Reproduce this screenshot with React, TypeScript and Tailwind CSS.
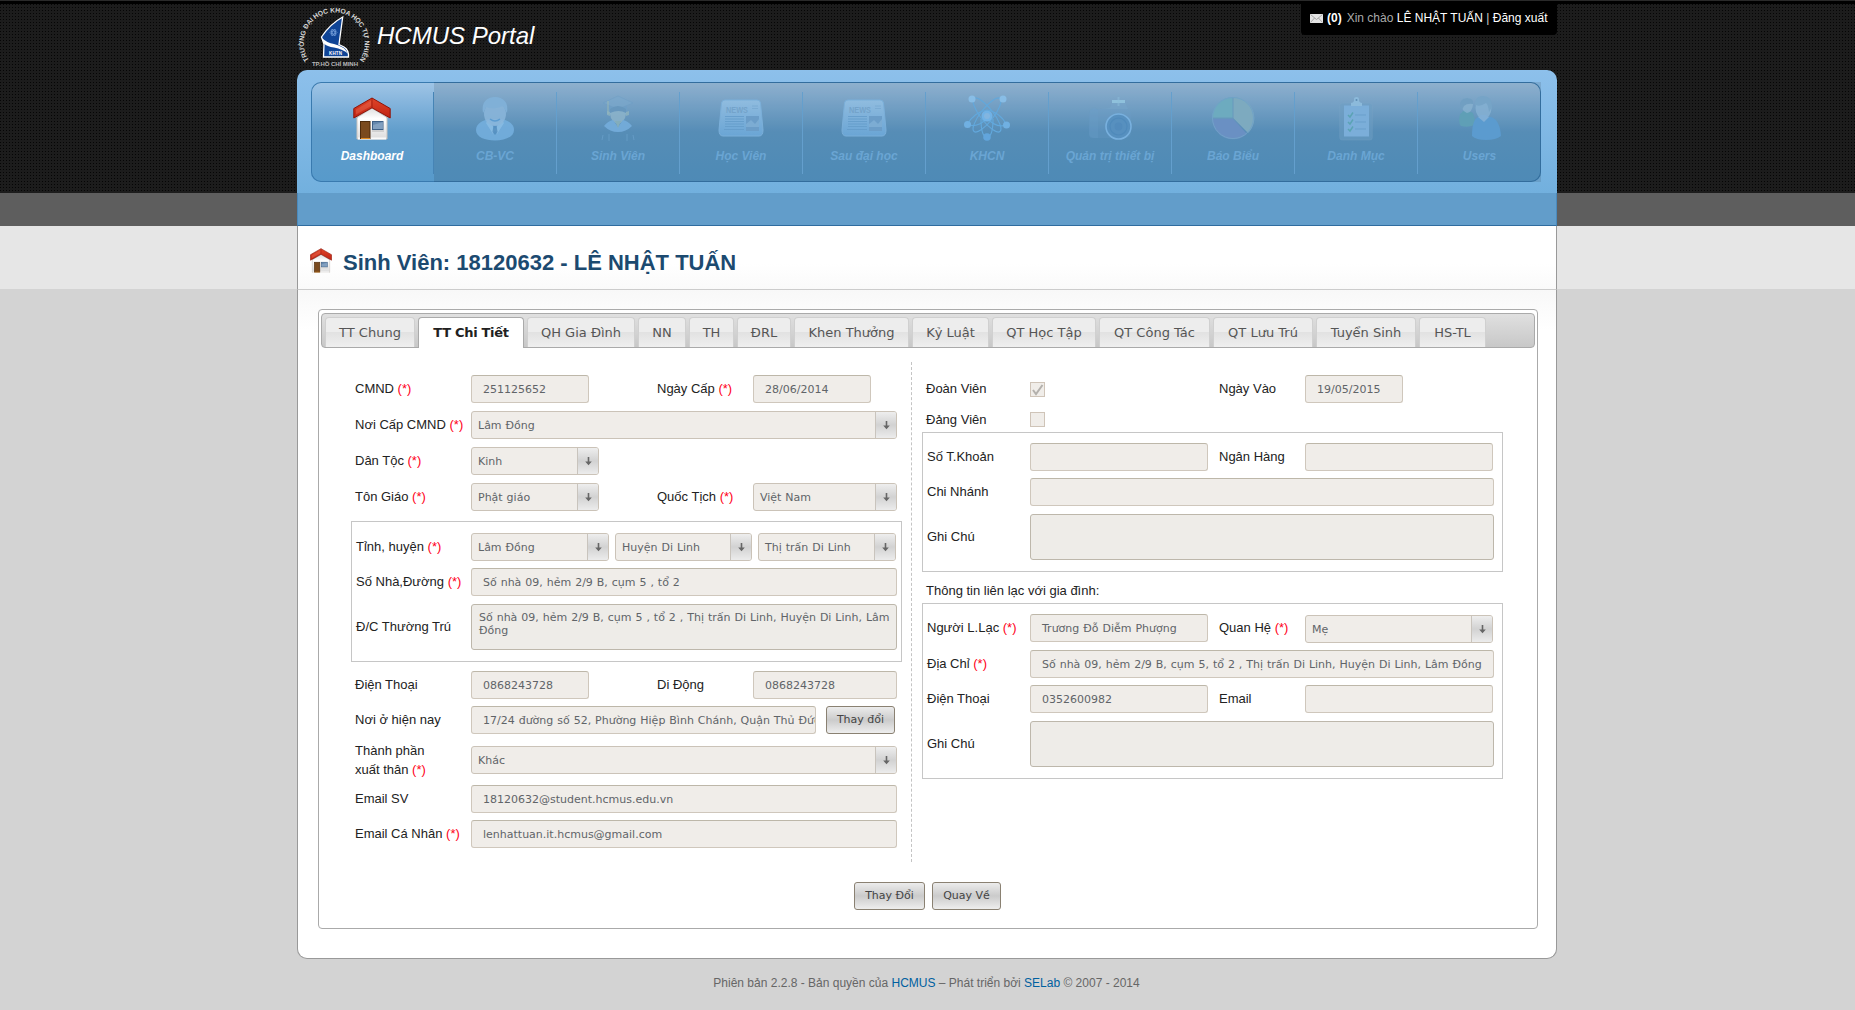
import React from "react";

type Kids = { children?: React.ReactNode };

/* ---------- icons ---------- */

function House({ className }: { className: string }) {
  return (
    <svg className={className} viewBox="0 0 38 43">
      <defs>
        <linearGradient id="wall" x1="0" y1="0" x2="0" y2="1">
          <stop offset="0" stopColor="#d4d4d4" />
          <stop offset=".4" stopColor="#ffffff" />
          <stop offset="1" stopColor="#dcdcdc" />
        </linearGradient>
        <linearGradient id="roof" x1="0" y1="0" x2="0" y2="1">
          <stop offset="0" stopColor="#e04428" />
          <stop offset="1" stopColor="#c02414" />
        </linearGradient>
      </defs>
      <path d="M4 17L19 8L34 17V42H4Z" fill="url(#wall)" stroke="#c9c4be" strokeWidth="1" />
      <path d="M5 40.5H33V42.5H5Z" fill="#fafafa" />
      <path d="M4 21L19 11.5L34 21V18L19 9L4 18Z" fill="#8e8e8e" opacity=".5" />
      <path d="M.8 11.5L19 1L37.2 11.5V21L19 10.8L.8 21Z" fill="url(#roof)" stroke="#8f1409" strokeWidth="1" />
      <path d="M3 12.5L18 3.8V9L3 17.5Z" fill="#f07a60" opacity=".35" />
      <path d="M19 1V10.8" stroke="#8f1409" strokeWidth=".7" />
      <rect x="7.500" y="24.500" width="9.500" height="17" fill="#7a4a1e" stroke="#4d2b0c" />
      <path d="M8 41.500H17" stroke="#e08a20" />
      <rect x="19.500" y="24.500" width="10.500" height="8" fill="#6487ad" stroke="#3d5f86" />
      <path d="M20 28L30 25V32H20Z" fill="#8fabc8" opacity=".7" />
      <path d="M19 34H31" stroke="#b8b8b8" />
    </svg>
  );
}

function Person() {
  return (
    <svg className="h-[45px] w-[40px]" viewBox="0 0 40 45">
      <path d="M1 34C1 27 9 24 14 23H26C32 24 39 27 39 34C39 41 30 44.500 20 44.500S1 41 1 34Z" fill="#76b0df" opacity=".85" />
      <path d="M13 24L20 33L27 24L29 27L22 38L20 34L18 38L11 27Z" fill="#8fc0e6" opacity=".7" />
      <path d="M18.500 29H21.500L22.500 36L20 39L17.500 36Z" fill="#4a86b8" opacity=".7" />
      <ellipse cx="20" cy="18" rx="11" ry="12" fill="#8bb6da" opacity=".85" />
      <path d="M8 17C6 6 12 1 20 1S34 6 32 17C30 14 29 11 27 10C21 14 14 12 11 11C10 14 9 15 8 17Z" fill="#80b0d7" />
      <path d="M15 23Q20 27 25 23" stroke="#5c9cd0" strokeWidth="1.600" fill="none" />
    </svg>
  );
}

function Graduate() {
  return (
    <svg className="h-[46px] w-[34px]" viewBox="0 0 34 46">
      <path d="M17 1L32 8L17 14L2 8Z" fill="#7ba9cd" opacity=".6" stroke="#6d9dc4" strokeWidth=".7" />
      <path d="M8 11V17Q17 10 26 17V11L17 14Z" fill="#6c9ec6" opacity=".7" />
      <path d="M9 15Q17 9 25 15V19Q24 27 17 29Q10 27 9 19Z" fill="#8fb5cb" opacity=".8" />
      <path d="M9 14Q17 8 25 14V18Q18 14 9 18Z" fill="#6797bd" />
      <path d="M7 6V19" stroke="#a0bcb4" strokeWidth="1.200" opacity=".7" />
      <path d="M6 16L9 17V21L6 20ZM28 16L25 17V21L28 20Z" fill="#94b6be" opacity=".7" />
      <path d="M3 31Q7 26 12 25L17 32L22 25Q27 26 31 31Q25 37 17 37T3 31Z" fill="#72aad8" />
      <path d="M14 26L17 33L20 26Z" fill="#83adbb" />
      <path d="M1 45L2 40M8 39V46M26 39V46M33 45L32 40" stroke="#6fa5d0" opacity=".6" />
    </svg>
  );
}

function News() {
  return (
    <svg className="h-[38px] w-[46px]" viewBox="0 0 46 38">
      <defs>
        <linearGradient id="paper" x1="0" y1="0" x2="0" y2="1">
          <stop offset="0" stopColor="#90bcdf" />
          <stop offset="1" stopColor="#6aa5d5" />
        </linearGradient>
      </defs>
      <path d="M7 1H39Q42 1 42.500 4L45 31Q45 37 41 37H5Q1 37 1 31L3.500 4Q4 1 7 1Z" fill="url(#paper)" stroke="#7bafd9" />
      <text x="8" y="13.500" fontSize="9" fontWeight="bold" textLength="22" lengthAdjust="spacingAndGlyphs" fill="#74a3ca" className="font-['Liberation_Sans']">NEWS</text>
      <path d="M34 7H40M34 9.500H40" stroke="#77a8d0" strokeWidth=".8" />
      <path d="M7 17.500H26M7 20H26M7 22.500H26M7 25H26M7 27.500H26M6 30.500H26" stroke="#659dcb" strokeWidth=".9" />
      <rect x="28" y="17" width="13" height="15" fill="#6b9dc8" />
      <path d="M28 25L33 21L37 25L41 20V28H28Z" fill="#7cacd3" />
    </svg>
  );
}

function Atom() {
  return (
    <svg className="h-[46px] w-[48px]" viewBox="0 0 48 46">
      <g fill="none" stroke="#62a8dc" strokeWidth="1.200">
        <ellipse cx="24" cy="20" rx="6.500" ry="21" transform="rotate(-38 24 20)" />
        <ellipse cx="24" cy="20" rx="6.500" ry="21" transform="rotate(38 24 20)" />
        <path d="M18 24C18 35 20 42 24 42S30 35 30 24" />
        <path d="M4.500 29.500C8 22 16 16 24 15C32 16 40 22 43.500 30" />
        <path d="M4.500 29.500C14 33 22 27 24 21C26 27 34 33 43.500 30" />
      </g>
      <circle cx="24" cy="21" r="5.500" fill="#70b2e6" />
      <circle cx="24" cy="21" r="3" fill="#82b5e0" />
      <g fill="#70b0e2">
        <circle cx="9" cy="4" r="3.500" fill="#88bde6" />
        <circle cx="40" cy="4" r="3.500" fill="#88bde6" />
        <circle cx="4.500" cy="29.500" r="3.500" />
        <circle cx="43.500" cy="30" r="3.500" />
        <circle cx="24" cy="42" r="3.800" fill="#62a5dc" />
      </g>
    </svg>
  );
}

function Camera() {
  return (
    <svg className="h-[45px] w-[44px]" viewBox="0 0 44 45">
      <rect x="1" y="13" width="42" height="29" rx="5" fill="#6fa2cc" opacity=".2" />
      <path d="M2 14Q6 9 10 14V42H4Q1 42 1 38Z" fill="#6c9fca" opacity=".25" />
      <path d="M12 13L22 12L25 4H36L40 13" fill="#79a9cd" opacity=".35" />
      <path d="M24 5.500H37" stroke="#8fc1dc" strokeWidth="3" />
      <path d="M30.500 1V10" stroke="#8dbedb" strokeWidth="2" opacity=".5" />
      <circle cx="30.500" cy="30.500" r="12.500" fill="#5790bf" stroke="#78b0de" strokeWidth="1.600" />
      <circle cx="30.500" cy="30.500" r="8.500" fill="none" stroke="#4f8abb" strokeWidth="1.200" />
      <circle cx="30.500" cy="30.500" r="4" fill="#528bbc" />
    </svg>
  );
}

function Pie() {
  return (
    <svg className="h-[44px] w-[44px]" viewBox="0 0 44 44">
      <path d="M22 22V1A21 21 0 0 1 37 37Z" fill="#7daabf" />
      <path d="M22 22H1A21 21 0 0 1 22 1Z" fill="#6dabbf" />
      <path d="M22 23H1A21 21 0 0 0 36 38Z" fill="#6a90c3" />
      <path d="M22 1V22L37 37M1 22H22" stroke="#6898bd" fill="none" />
      <circle cx="22" cy="22" r="20.500" fill="none" stroke="#70a2c8" />
    </svg>
  );
}

function Clipboard() {
  return (
    <svg className="h-[45px] w-[34px]" viewBox="0 0 34 45">
      <rect x=".7" y="7" width="32.600" height="37" rx="2.500" fill="#6e9fc5" opacity=".5" stroke="#83abc9" strokeOpacity=".5" />
      <rect x="5" y="9.500" width="25" height="31" fill="#7baed9" />
      <path d="M12 10V7Q14 7 15 5V3Q15 1 17.500 1T20 3V5Q21 7 23 7V10Z" fill="#8cbadb" />
      <circle cx="17.500" cy="4" r="1" fill="#5d8db3" />
      <path d="M9 19L11 21L14 16.500M9 26L11 28L14 23.500M9 33L11 35L14 30.500" stroke="#5ba3b4" strokeWidth="1.500" fill="none" />
      <path d="M16 19H27M16 26H27M16 33H27" stroke="#6b9fcb" />
    </svg>
  );
}

function UsersIcon() {
  return (
    <svg className="h-[46px] w-[44px]" viewBox="0 0 44 46">
      <path d="M1 25Q1 17 8 15L15 18L18 29Q12 33 3 31Q1 29 1 25Z" fill="#5f9fb6" />
      <path d="M3 10Q3 3 9 3T15 10Q14 17 9 18Q4 16 3 10Z" fill="#88b2cf" opacity=".8" />
      <path d="M2 11Q2 3 9 3T15 9Q9 8 6 11L4 15Z" fill="#719fc2" />
      <path d="M14 41Q14 25 20 22L33 22Q42 25 43 41Q38 45 28 45T14 41Z" fill="#5b9bcf" />
      <ellipse cx="25.500" cy="13" rx="8" ry="11" fill="#84afd1" opacity=".9" />
      <path d="M17 12Q16 1 25 1T34 12L31 17Q30 9 28 8Q22 12 18 10Z" fill="#76a4c7" />
      <path d="M20 22L26 27L31 22L28 20H23Z" fill="#80aed5" />
    </svg>
  );
}

function Logo() {
  return (
    <svg className="h-[64px] w-[76px] shrink-0" viewBox="0 0 76 64">
      <defs>
        <path id="arc" d="M12.700 57A30.500 30.500 0 1 1 61.900 57" />
      </defs>
      <text className="font-['Liberation_Sans']" fontSize="6.800" fontWeight="bold" fill="#d4d4d4">
        <textPath href="#arc" startOffset="1" textLength="132">TRƯỜNG ĐẠI HỌC KHOA HỌC TỰ NHIÊN</textPath>
      </text>
      <path d="M45.700 13Q33 20 24.500 33L27 40L26.500 53H51.500Q52 46 47 43L42 40.500Z" fill="#0f4496" stroke="#fff" strokeWidth="1.300" />
      <path d="M25 34Q30 39 37 40Q47 42 51.500 50Q46 45 37 43.500Q30 42.500 27 39.500Z" fill="#fff" />
      <g fill="none" stroke="#6f9ad6" strokeWidth=".8">
        <ellipse cx="36.500" cy="28.500" rx="3.500" ry="1.500" />
        <ellipse cx="36.500" cy="28.500" rx="3.500" ry="1.500" transform="rotate(60 36.500 28.500)" />
        <ellipse cx="36.500" cy="28.500" rx="3.500" ry="1.500" transform="rotate(120 36.500 28.500)" />
      </g>
      <text className="font-['Liberation_Sans']" x="32" y="51.300" fontSize="4.500" fontWeight="bold" textLength="13" fill="#fff">KHTN</text>
      <text className="font-['Liberation_Sans']" x="15" y="61.500" fontSize="6" fontWeight="bold" textLength="46" fill="#b8b8b8">TP.HỒ CHÍ MINH</text>
    </svg>
  );
}

/* ---------- form controls ---------- */

const Req = () => <span className="text-[#ff0018]"> (*)</span>;

function Label({ w, req, children }: Kids & { w: string; req?: boolean }) {
  return (
    <span className={`${w} shrink-0 whitespace-nowrap`}>
      {children}
      {req && <Req />}
    </span>
  );
}

function Field({ w, children }: Kids & { w: string }) {
  return (
    <div className={`${w} h-7 shrink-0 overflow-hidden rounded-[3px] border border-[#cfc7bc] border-t-[#bdb7a9] bg-[#f0ede9] pl-[11px] font-['DejaVu_Sans'] text-[11px] leading-[27px] [word-spacing:0.45px] whitespace-nowrap text-[#606468]`}>
      {children}
    </div>
  );
}

function Pick({ w, children }: Kids & { w: string }) {
  return (
    <div className={`${w} flex h-7 shrink-0 overflow-hidden rounded-[3px] border border-[#cbc3b8] bg-[#f0ede9] font-['DejaVu_Sans'] text-[11px] leading-[27px] [word-spacing:0.45px] whitespace-nowrap text-[#606468]`}>
      <span className="flex-1 pl-[6px]">{children}</span>
      <span className="flex w-[21px] items-center justify-center border-l border-[#c9c4bd] bg-linear-to-b from-[#eeeeee] via-[#d2d2d2] to-[#ececec]">
        <svg className="h-[9px] w-[9px]" viewBox="0 0 9 9">
          <path d="M3.700 0H5.300V4.500H7.800L4.500 8.300L1.200 4.500H3.700Z" fill="#666" />
        </svg>
      </span>
    </div>
  );
}

function Area({ w, children }: Kids & { w: string }) {
  return (
    <div className={`${w} h-[46px] shrink-0 rounded-[3px] border border-[#bdb7ab] bg-[#eeece8] pt-[6px] pl-[7px] font-['DejaVu_Sans'] text-[11px] leading-[13px] [word-spacing:0.45px] text-[#606468]`}>
      {children}
    </div>
  );
}

function Button({ w, children }: Kids & { w: string }) {
  return (
    <button className={`${w} h-7 shrink-0 rounded-[3px] border border-[#8a8172] bg-linear-to-b from-[#ececec] via-[#cbcbcb] to-[#eeeeee] font-['DejaVu_Sans'] text-[11px] text-[#444]`}>
      {children}
    </button>
  );
}

function Check({ on }: { on?: boolean }) {
  return (
    <span className="flex h-[15px] w-[15px] items-center justify-center border border-[#cfc4b8] bg-[#f0ede9]">
      {on && (
        <svg className="h-[13px] w-[13px]" viewBox="0 0 13 13">
          <path d="M2 7L5 11L11.500 2" fill="none" stroke="#b3b0ac" strokeWidth="2" />
        </svg>
      )}
    </span>
  );
}

function Row({ mt, children }: Kids & { mt: string }) {
  return <div className={`${mt} flex h-7 items-center`}>{children}</div>;
}

/* ---------- data ---------- */

const nav = [
  { t: "Dashboard", icon: <House className="h-[43px] w-[38px]" /> },
  { t: "CB-VC", icon: <Person /> },
  { t: "Sinh Viên", icon: <Graduate /> },
  { t: "Học Viên", icon: <News /> },
  { t: "Sau đại học", icon: <News /> },
  { t: "KHCN", icon: <Atom /> },
  { t: "Quản trị thiết bị", icon: <Camera /> },
  { t: "Báo Biểu", icon: <Pie /> },
  { t: "Danh Mục", icon: <Clipboard /> },
  { t: "Users", icon: <UsersIcon /> },
];

const tabs = [
  { t: "TT Chung", w: "w-[90px]" },
  { t: "TT Chi Tiết", w: "w-[106px]" },
  { t: "QH Gia Đình", w: "w-[108px]" },
  { t: "NN", w: "w-[48px]" },
  { t: "TH", w: "w-[45px]" },
  { t: "ĐRL", w: "w-[54px]" },
  { t: "Khen Thưởng", w: "w-[115px]" },
  { t: "Kỷ Luật", w: "w-[77px]" },
  { t: "QT Học Tập", w: "w-[104px]" },
  { t: "QT Công Tác", w: "w-[111px]" },
  { t: "QT Lưu Trú", w: "w-[100px]" },
  { t: "Tuyển Sinh", w: "w-[100px]" },
  { t: "HS-TL", w: "w-[67px]" },
];

/* ---------- page sections ---------- */

function Header() {
  return (
    <header className="h-[193px] border-t border-[#2a2a2a] bg-[conic-gradient(at_1px_1px,#1c1c1c_75%,#050505_0)] bg-size-[3px_3px] pr-px">
      <div className="-mr-px h-[3px] bg-black" />
      <div className="mx-auto flex h-[66px] w-[1260px] items-start justify-between">
        <div className="flex">
          <Logo />
          <h1 className="ml-[4px] pt-[18px] text-2xl leading-[28px] text-white italic">HCMUS Portal</h1>
        </div>
        <div className="flex h-[31px] w-[256px] items-center rounded-b-[4px] bg-black pb-[3px] pl-[9px] text-xs whitespace-pre text-[#aaa]">
          <svg className="mr-1 h-[9px] w-[13px]" viewBox="0 0 13 9">
            <rect width="13" height="9" fill="#e4e4e4" />
            <path d="M.5 .5L6.500 5.500L12.500 .5M.5 8.500L4.500 4M12.500 8.500L8.500 4" fill="none" stroke="#999" strokeWidth=".8" />
          </svg>
          <span className="font-bold text-white">(0)</span>
          <span className="pl-[5px]">Xin chào </span>
          <span className="text-white">LÊ NHẬT TUẤN</span>
          <span className="text-[#ccc]"> | </span>
          <span className="text-white">Đăng xuất</span>
        </div>
      </div>
      <div className="mx-auto h-[123px] w-[1260px] rounded-t-[10px] bg-linear-to-b from-[#8dc0eb] to-[#72b0de] px-[14px] pt-3">
        <nav className="flex h-[100px] w-[1230px] rounded-[10px] bg-[linear-gradient(#a0c5e6,#7fb1da_25%,#609dcb_50%,#579acb)] shadow-[inset_0_0_0_1px_#397aaf]">
          {nav.map((n, i) => (
            <div key={n.t} className={`flex w-[123px] pt-[10px] ${i ? "bg-black/10" : ""}`}>
              <div className={`flex h-[82px] w-[123px] flex-col items-center ${i === 0 ? "border-r border-[#4684b5]" : i < 9 ? "border-r border-[#649fcd]" : ""}`}>
                <div className="flex h-[52px] items-center">{n.icon}</div>
                <span className={`pt-[4px] text-xs leading-4 font-bold whitespace-nowrap italic ${i ? "text-[#6aa5d3]" : "text-white"}`}>{n.t}</span>
              </div>
            </div>
          ))}
        </nav>
      </div>
    </header>
  );
}

function LeftColumn() {
  return (
    <div className="w-[560px]">
      <div className="pl-1">
        <Row mt="mt-0">
          <Label w="w-[116px]" req>CMND</Label>
          <Field w="w-[118px]">251125652</Field>
          <Label w="w-[96px] ml-[68px]" req>Ngày Cấp</Label>
          <Field w="w-[118px]">28/06/2014</Field>
        </Row>
        <Row mt="mt-2">
          <Label w="w-[116px]" req>Nơi Cấp CMND</Label>
          <Pick w="w-[426px]">Lâm Đồng</Pick>
        </Row>
        <Row mt="mt-2">
          <Label w="w-[116px]" req>Dân Tộc</Label>
          <Pick w="w-[128px]">Kinh</Pick>
        </Row>
        <Row mt="mt-2">
          <Label w="w-[116px]" req>Tôn Giáo</Label>
          <Pick w="w-[128px]">Phật giáo</Pick>
          <Label w="w-[96px] ml-[58px]" req>Quốc Tịch</Label>
          <Pick w="w-[144px]">Việt Nam</Pick>
        </Row>
      </div>
      <div className="mt-[10px] h-[141px] w-[551px] border border-[#c6c6c6] pt-[11px] pl-1">
        <Row mt="mt-0">
          <Label w="w-[115px]" req>Tỉnh, huyện</Label>
          <div className="flex gap-[6px]">
            <Pick w="w-[138px]">Lâm Đồng</Pick>
            <Pick w="w-[137px]">Huyện Di Linh</Pick>
            <Pick w="w-[138px]">Thị trấn Di Linh</Pick>
          </div>
        </Row>
        <Row mt="mt-[7px]">
          <Label w="w-[115px]" req>Số Nhà,Đường</Label>
          <Field w="w-[426px]">Số nhà 09, hẻm 2/9 B, cụm 5 , tổ 2</Field>
        </Row>
        <div className="mt-2 flex items-center">
          <Label w="w-[115px]">Đ/C Thường Trú</Label>
          <Area w="w-[426px]">Số nhà 09, hẻm 2/9 B, cụm 5 , tổ 2 , Thị trấn Di Linh, Huyện Di Linh, Lâm Đồng</Area>
        </div>
      </div>
      <div className="pl-1">
        <Row mt="mt-[9px]">
          <Label w="w-[116px]">Điện Thoại</Label>
          <Field w="w-[118px]">0868243728</Field>
          <Label w="w-[96px] ml-[68px]">Di Động</Label>
          <Field w="w-[144px]">0868243728</Field>
        </Row>
        <Row mt="mt-[7px]">
          <Label w="w-[116px]">Nơi ở hiện nay</Label>
          <Field w="w-[345px] mr-[10px]">17/24 đường số 52, Phường Hiệp Bình Chánh, Quận Thủ Đức</Field>
          <Button w="w-[69px]">Thay đổi</Button>
        </Row>
        <Row mt="mt-3">
          <span className="w-[116px] leading-[19px]">
            Thành phần
            <br />
            xuất thân
            <Req />
          </span>
          <Pick w="w-[426px]">Khác</Pick>
        </Row>
        <Row mt="mt-[11px]">
          <Label w="w-[116px]">Email SV</Label>
          <Field w="w-[426px]">18120632@student.hcmus.edu.vn</Field>
        </Row>
        <Row mt="mt-[7px]">
          <Label w="w-[116px]" req>Email Cá Nhân</Label>
          <Field w="w-[426px]">lenhattuan.it.hcmus@gmail.com</Field>
        </Row>
      </div>
    </div>
  );
}

function RightColumn() {
  return (
    <div className="h-[500px] w-[593px] border-l border-dashed border-[#c4c4c4] pt-[13px] pl-[10px]">
      <div className="pl-[4px]">
        <Row mt="mt-0">
          <Label w="w-[104px]">Đoàn Viên</Label>
          <Check on />
          <Label w="w-[86px] ml-[174px]">Ngày Vào</Label>
          <Field w="w-[98px]">19/05/2015</Field>
        </Row>
        <div className="mt-[9px] flex h-[15px] items-center">
          <Label w="w-[104px]">Đảng Viên</Label>
          <Check />
        </div>
      </div>
      <div className="mt-[5px] h-[140px] w-[581px] border border-[#c6c6c6] pt-[10px] pl-1">
        <Row mt="mt-0">
          <Label w="w-[103px]">Số T.Khoản</Label>
          <Field w="w-[178px]" />
          <Label w="w-[86px] ml-[11px]">Ngân Hàng</Label>
          <Field w="w-[188px]" />
        </Row>
        <Row mt="mt-[7px]">
          <Label w="w-[103px]">Chi Nhánh</Label>
          <Field w="w-[464px]" />
        </Row>
        <div className="mt-2 flex items-center">
          <Label w="w-[103px]">Ghi Chú</Label>
          <Area w="w-[464px]" />
        </div>
      </div>
      <p className="flex h-[31px] items-center pt-[6px] pl-[4px]">Thông tin liên lạc với gia đình:</p>
      <div className="h-[176px] w-[581px] border border-[#c6c6c6] pt-[10px] pl-1">
        <Row mt="mt-0">
          <Label w="w-[103px]" req>Người L.Lạc</Label>
          <Field w="w-[178px]">Trương Đỗ Diễm Phượng</Field>
          <Label w="w-[86px] ml-[11px]" req>Quan Hệ</Label>
          <Pick w="w-[188px] mt-[2px]">Mẹ</Pick>
        </Row>
        <Row mt="mt-2">
          <Label w="w-[103px]" req>Địa Chỉ</Label>
          <Field w="w-[464px]">Số nhà 09, hẻm 2/9 B, cụm 5, tổ 2 , Thị trấn Di Linh, Huyện Di Linh, Lâm Đồng</Field>
        </Row>
        <Row mt="mt-[7px]">
          <Label w="w-[103px]">Điện Thoại</Label>
          <Field w="w-[178px]">0352600982</Field>
          <Label w="w-[86px] ml-[11px]">Email</Label>
          <Field w="w-[188px]" />
        </Row>
        <div className="mt-2 flex items-center">
          <Label w="w-[103px]">Ghi Chú</Label>
          <Area w="w-[464px]" />
        </div>
      </div>
    </div>
  );
}

export default function App() {
  return (
    <div className="min-h-[1010px] bg-[#d3d3d3] font-['Liberation_Sans',sans-serif] text-xs text-[#222]">
      <Header />
      <div className="h-[33px] bg-[#5e5e5e] pr-px">
        <div className="mx-auto h-full w-[1260px] border-x border-b border-x-[#4a8abd] border-b-[#2f6c9f] bg-[#629dca]" />
      </div>
      <div className="h-[63px] bg-[#e6e6e6] pr-px">
        <div className="mx-auto flex h-[64px] w-[1260px] border border-t-0 border-[#999] border-b-[#ccc] bg-linear-to-b from-white from-60% to-[#fafafa] pl-[12px]">
          <House className="mt-[22px] h-[25px] w-[22px]" />
          <h2 className="ml-[11px] pt-[24px] text-[22px] leading-[26px] font-bold text-[#1c4a70]">Sinh Viên: 18120632 - LÊ NHẬT TUẤN</h2>
        </div>
      </div>
      <div className="pr-px">
        <main className="mx-auto mt-px h-[669px] w-[1260px] rounded-b-[10px] border border-t-0 border-[#999] bg-linear-to-b from-[#f8f8f8] to-white to-[40px] px-[20px] pt-[19px]">
          <div className="h-[620px] w-[1220px] rounded-[4px] border border-[#aaa] bg-white p-[2px] pt-[3px]">
            <div className="flex h-[35px] w-[1214px] gap-[3px] rounded-[4px] border border-[#aaa] bg-linear-to-b from-[#e0e0e0] to-[#c8c8c8] pt-[3px] pl-[3px]">
              {tabs.map((t, i) => (
                <div
                  key={t.t}
                  className={
                    i === 1
                      ? `${t.w} relative h-[31px] shrink-0 rounded-t-[4px] border border-b-0 border-[#aaa] bg-white text-center font-['DejaVu_Sans'] text-[13px] leading-[29px] font-bold tracking-[-0.3px] whitespace-nowrap text-[#212121]`
                      : `${t.w} h-[30px] shrink-0 rounded-t-[4px] border border-b-0 border-[#d0d0d0] bg-[linear-gradient(#ededed_50%,#e2e2e2_50%,#efefef)] text-center font-['DejaVu_Sans'] text-[13px] leading-[29px] whitespace-nowrap text-[#555]`
                  }
                >
                  {t.t}
                </div>
              ))}
            </div>
            <div className="mt-[14px] flex pl-[30px] text-[13px]">
              <div className="pt-[13px]">
                <LeftColumn />
              </div>
              <RightColumn />
            </div>
            <div className="mt-5 flex gap-[7px] pl-[533px]">
              <Button w="w-[71px]">Thay Đổi</Button>
              <Button w="w-[69px]">Quay Về</Button>
            </div>
          </div>
        </main>
      </div>
      <footer className="pt-[16px] pr-[2px] text-center leading-4 text-[#666]">
        Phiên bản 2.2.8 - Bản quyền của <span className="text-[#0060a0]">HCMUS</span> – Phát triển bởi <span className="text-[#0060a0]">SELab</span> © 2007 - 2014
      </footer>
    </div>
  );
}
